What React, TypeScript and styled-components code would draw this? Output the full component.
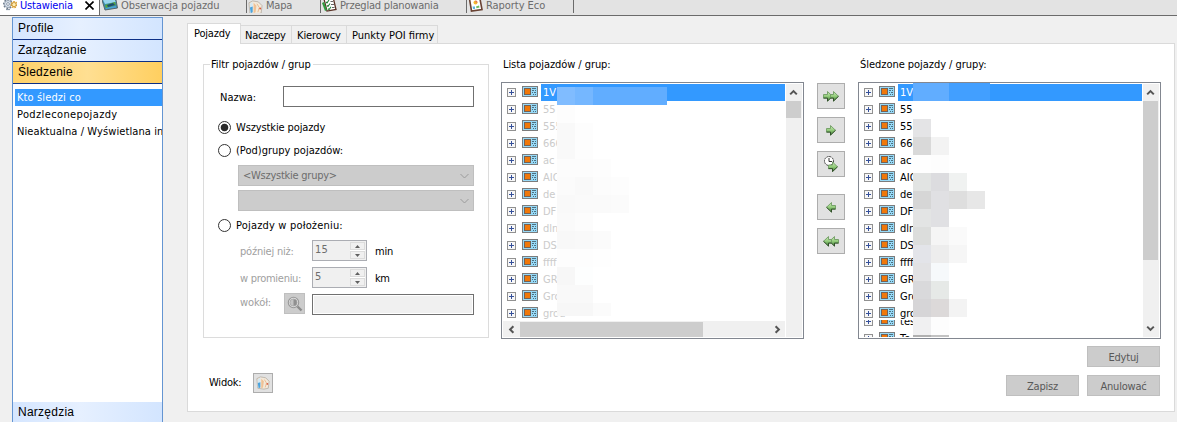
import React from 'react';
import styled, { createGlobalStyle, css } from 'styled-components';

const Global = createGlobalStyle`
  * { box-sizing: border-box; }
  body { margin: 0; background: #f0f0f0; overflow: hidden; }
`;

const App_ = styled.div`
  width: 1177px;
  height: 422px;
  overflow: hidden;
  display: flex;
  flex-direction: column;
  background: #f0f0f0;
  color: #000;
  font: 11px/17px 'DejaVu Sans Condensed', 'DejaVu Sans', sans-serif;
  font-stretch: condensed;
  white-space: pre;
  svg { display: block; flex: none; }
`;

const Text = styled.span<{ $ls?: number; $color?: string }>`
  letter-spacing: ${p => p.$ls ?? -0.2}px;
  color: ${p => p.$color ?? 'inherit'};
`;

/* Top document tabs */
const TopBar = styled.div`
  display: flex;
  flex: none;
  height: 16px;
  background: #e3e3e3;
  border-bottom: 1px solid #6b6b6b;
`;
const TopTab = styled.div<{ $w: number; $active?: boolean; $pad?: number }>`
  display: flex;
  align-items: flex-start;
  width: ${p => p.$w}px;
  height: ${p => (p.$active ? 15 : 13)}px;
  padding-left: ${p => p.$pad ?? 0}px;
  gap: 3px;
  overflow: hidden;
  border-right: 1px solid #6b6b6b;
  color: ${p => (p.$active ? '#0000f0' : '#6c6c6c')};
  background: ${p => (p.$active ? '#fff' : 'transparent')};
  ${Text} { line-height: 17px; margin-top: -3px; }
`;
const CloseX = styled.svg`margin: 1px 0 0 9px;`;

const Body = styled.div`
  display: flex;
  flex: 1;
  min-height: 0;
`;

/* Sidebar */
const Sidebar = styled.div`
  display: flex;
  flex-direction: column;
  flex: none;
  width: 151px;
  height: 407px;
  margin: 1px 0 0 12px;
  border: 1px solid #6495d2;
  border-bottom: 0;
  background: #fff;
  overflow: hidden;
`;
const Section = styled.div<{ $active?: boolean }>`
  flex: none;
  height: 22px;
  padding-left: 5px;
  border-bottom: 1px solid #0c2f86;
  font: 12px/21px 'Liberation Sans', sans-serif;
  letter-spacing: 0.25px;
  background: ${p =>
    p.$active
      ? 'linear-gradient(90deg, #ffd168, #ffdf92 50%, #ffcf60)'
      : 'linear-gradient(90deg, #d5e6ff, #e6f0ff 45%, #d3e5ff)'};
`;
const SideItems = styled.div`
  flex: 1;
  padding: 5px 0 0 2px;
`;
const SideItem = styled.div<{ $selected?: boolean }>`
  height: 17px;
  padding-left: 2px;
  overflow: hidden;
  ${p => p.$selected && css`background: #3399ff; color: #fff;`}
`;

/* Main area */
const Main = styled.div`
  display: flex;
  flex-direction: column;
  width: 988px;
  margin: 7px 0 0 24px;
`;
const Tabs = styled.div`
  display: flex;
  align-items: flex-end;
  height: 20px;
`;
const Tab = styled.div<{ $w: number; $active?: boolean; $pad?: number }>`
  width: ${p => p.$w}px;
  height: ${p => (p.$active ? 21 : 18)}px;
  margin-bottom: ${p => (p.$active ? -1 : 0)}px;
  padding-left: ${p => p.$pad ?? 5}px;
  line-height: 19px;
  border: 1px solid #dadada;
  border-left-width: ${p => (p.$active ? 1 : 0)}px;
  border-bottom: 0;
  position: relative;
  background: ${p => (p.$active ? '#fff' : '#f0f0f0')};
`;
const Panel = styled.div`
  display: flex;
  height: 369px;
  background: #fff;
  border: 1px solid #dadada;
`;
const FilterCol = styled.div`
  width: 286px;
  margin: 12px 0 0 15px;
`;
const FilterBox = styled.fieldset`
  height: 282px;
  margin: 0;
  padding: 13px 14px 0 14px;
  min-width: 0;
  border: 1px solid #dcdcdc;
  legend { padding: 0 2px 0 1px; margin-left: -8px; line-height: 18px; height: 17px; }
`;
const Row = styled.div<{ $h: number; $mt?: number; $indent?: number }>`
  display: flex;
  align-items: center;
  height: ${p => p.$h}px;
  margin-top: ${p => p.$mt ?? 0}px;
  padding-left: ${p => p.$indent ?? 0}px;
`;
const Label = styled.div<{ $w: number; $muted?: boolean; $pt?: number; $pb?: number }>`
  flex: none;
  width: ${p => p.$w}px;
  padding-top: ${p => p.$pt ?? 0}px;
  padding-bottom: ${p => p.$pb ?? 0}px;
  color: ${p => (p.$muted ? '#a0a0a0' : '#000')};
`;
const Input = styled.div<{ $w: number; $disabled?: boolean }>`
  width: ${p => p.$w}px;
  height: 21px;
  flex: none;
  border: 1px solid #707070;
  background: ${p => (p.$disabled ? '#f0f0f0' : '#fff')};
  ${p => p.$disabled && css`box-shadow: inset 0 0 0 1px #fff;`}
`;
const Radio = styled.div<{ $on?: boolean }>`
  width: 13px;
  height: 13px;
  flex: none;
  margin-right: 5px;
  border-radius: 50%;
  border: 1px solid #333;
  background: ${p => (p.$on ? 'radial-gradient(circle, #2b2b2b 3.4px, #fff 4.2px)' : '#fff')};
`;
const Select = styled.div`
  display: flex;
  align-items: center;
  justify-content: space-between;
  width: 236px;
  height: 21px;
  padding: 0 4px;
  border: 1px solid #bfbfbf;
  background: #ccc;
  color: #6d6d6d;
`;
const Spinner = styled.div`
  display: flex;
  justify-content: space-between;
  width: 55px;
  height: 21px;
  flex: none;
  margin-right: 8px;
  padding-left: 2px;
  border: 1px solid #abadb3;
  background: #f0f0f0;
  color: #6d6d6d;
`;
const SpinButtons = styled.div`
  display: flex;
  flex-direction: column;
  gap: 1px;
  width: 15px;
  margin: 1px 1px 1px 0;
  background: #fff;
`;
const SpinButton = styled.div`
  display: flex;
  align-items: center;
  justify-content: center;
  flex: 1;
  border: 1px solid #dcdcdc;
  background: #f0f0f0;
`;
const IconButton = styled.div<{ $w: number; $h: number; $dark?: boolean; $mt?: number }>`
  display: flex;
  align-items: center;
  justify-content: center;
  flex: none;
  width: ${p => p.$w}px;
  height: ${p => p.$h}px;
  margin-top: ${p => p.$mt ?? 0}px;
  border: 1px solid ${p => (p.$dark ? '#bfbfbf' : '#adadad')};
  background: ${p => (p.$dark ? '#ccc' : '#e1e1e1')};
`;

const ListCol = styled.div<{ $ml: number }>`
  width: 303px;
  flex: none;
  margin: 11px 0 0 ${p => p.$ml}px;
`;
const ListTitle = styled.div`
  height: 27px;
  padding-left: 2px;
  line-height: 20px;
`;
const ListBox = styled.div`
  position: relative;
  display: flex;
  height: 257px;
  padding: 1px;
  border: 1px solid #828790;
  overflow: hidden;
`;
const ListMain = styled.div`
  display: flex;
  flex-direction: column;
  flex: 1;
`;
const Rows = styled.div<{ $h: number; $muted?: boolean; $shift?: number }>`
  height: ${p => p.$h}px;
  flex: none;
  overflow: hidden;
  color: ${p => (p.$muted ? '#cbcbcb' : '#000')};
  & > :first-child { margin-top: -${p => p.$shift ?? 0}px; }
`;
const TreeRow = styled.div`
  display: flex;
  align-items: center;
  height: 17px;
  padding-left: 4px;
`;
const TreeIcon = styled.svg`margin: -2px 0 0 6px;`;
const TreeText = styled.div<{ $selected?: boolean }>`
  flex: 1;
  height: 17px;
  margin-left: 3px;
  padding-left: 2px;
  ${p => p.$selected && css`background: #3399ff; color: #fff;`}
`;
const VScroll = styled.div`
  display: flex;
  flex-direction: column;
  align-items: flex-start;
  width: 16px;
  margin-left: 1px;
  background: #f0f0f0;
`;
const Arrow = styled.div`
  display: flex;
  align-items: center;
  justify-content: center;
  flex: none;
  width: 15px;
  height: 17px;
`;
const VThumb = styled.div<{ $h: number }>`
  width: 15px;
  height: ${p => p.$h}px;
  margin-bottom: auto;
  background: #cdcdcd;
`;
const HScroll = styled.div`
  display: flex;
  align-items: center;
  height: 16px;
  padding-left: 1px;
  background: #f0f0f0;
`;
const HThumb = styled.div`
  width: 183px;
  height: 15px;
  margin: 0 auto 0 1px;
  background: #cdcdcd;
`;
/* Pixelated cover drawn over the row names */
const Mask = styled.div<{ $x: number; $y: number }>`
  position: absolute;
  left: ${p => p.$x}px;
  top: ${p => p.$y}px;
`;
const MaskRow = styled.div<{ $h?: number; $gap?: boolean }>`
  display: flex;
  width: 108px;
  height: ${p => p.$h ?? 18}px;
  background: ${p => (p.$gap ? 'transparent' : '#fff')};
`;
const MaskCell = styled.div<{ $c: string; $w?: number }>`
  flex: none;
  width: ${p => p.$w ?? 18}px;
  background: ${p => p.$c};
`;

const MoveCol = styled.div`
  width: 28px;
  flex: none;
  margin: 39px 0 0 13px;
`;
const Footer = styled.div`
  display: flex;
  flex-direction: column;
  align-items: flex-end;
  gap: 8px;
  margin: 7px 1px 0 0;
`;
const ButtonRow = styled.div`
  display: flex;
  gap: 8px;
`;
const Button = styled.div`
  width: 73px;
  height: 21px;
  text-align: center;
  line-height: 21px;
  border: 1px solid #bfbfbf;
  background: #ccc;
  color: #585858;
`;

const Gears = () => (
  <svg width="16" height="12" viewBox="0 0 16 12">
    <circle cx="7" cy="4" r="4.2" fill="none" stroke="#6f7c8c" strokeWidth="1.6" strokeDasharray="1.8 1.3" />
    <circle cx="7" cy="4" r="3.5" fill="#dfe7f1" stroke="#8290a2" strokeWidth=".8" />
    <circle cx="7" cy="4" r="1.4" fill="#fff" stroke="#66758a" strokeWidth=".7" />
    <circle cx="13" cy="4.6" r="2.9" fill="none" stroke="#d9a02c" strokeWidth="1.4" strokeDasharray="1.6 .9" />
    <circle cx="13" cy="4.6" r="2.1" fill="#ffeeb4" stroke="#c98c22" strokeWidth=".8" />
    <path d="M5 9.6h4" stroke="#8290a2" />
  </svg>
);
const Screen = () => (
  <svg width="16" height="12" viewBox="0 0 16 12">
    <path d="M0 0L14 0 15.5 8 3 10z" fill="#3b8fb0" stroke="#56646c" />
    <path d="M1 0h12l.6 2L3 4z" fill="#9ad5ee" />
    <path d="M3 5l10-3 .8 3L4 8z" fill="#57a53a" />
    <path d="M5 5l6-2 2 2-7 2z" fill="#1d4c74" />
    <path d="M3.6 8l10-2 .6 1.4L4 9z" fill="#4ba6d8" />
  </svg>
);
const MapIcon = ({ size = 15 }: { size?: number }) => (
  <svg width={size} height={size} viewBox="0 0 16 16">
    <path d="M1 3l4-2 6 1 4 4-1 8-5 1-7-1z" fill="#f3e9da" stroke="#b0a79c" strokeWidth=".8" />
    <path d="M2 4l3-2v6l-2 6-1-1z" fill="#d4e8f3" />
    <path d="M2 8l3-1v6l-2 1z" fill="#4ba3dd" />
    <path d="M6 3l3 3-1 7-2 1z" fill="#efc194" />
    <path d="M9.5 4l2.5 4-1.5 5" fill="none" stroke="#e8b78b" strokeWidth="1" />
    <circle cx="13" cy="9" r="1" fill="#dd5a3c" />
  </svg>
);
const Checklist = () => (
  <svg width="16" height="12" viewBox="0 0 16 12">
    <path d="M3 -1h9.5l2.5 10.5-9 1.6z" fill="#fff" stroke="#5a3226" strokeWidth="1.3" />
    <path d="M1 3l3 8 2-1L3 2z" fill="#2f9a3e" />
    <path d="M5 2l1 1 2-3M6 5.5l1 1 2-3M7 8.7l1 1 2-3" fill="none" stroke="#238238" strokeWidth="1.1" />
    <path d="M9.5 1.5h2.5M10 4.5h3M11 7.5h2.5" stroke="#666" />
  </svg>
);
const Report = () => (
  <svg width="16" height="12" viewBox="0 0 16 12">
    <path d="M2.5 -1L13 -1 15 9.5 4.5 11z" fill="#fff" stroke="#6a4334" strokeWidth="1.6" />
    <circle cx="8.5" cy="2.5" r="2" fill="#f5bb2f" />
    <path d="M8.5 2.5V.5a2 2 0 012 2z" fill="#e36a5e" />
    <path d="M5.5 6.5h2.5v2.5h-2z" fill="#5cb3df" />
    <path d="M9 6.5l3-1 .5 2-3 .7z" fill="#6cbd62" />
  </svg>
);
const Plus = () => (
  <svg width="9" height="9" viewBox="0 0 9 9" shapeRendering="crispEdges">
    <rect x=".5" y=".5" width="8" height="8" fill="#f7f7f7" stroke="#919191" />
    <path d="M2 4.5h5M4.5 2v5" stroke="#35509a" />
  </svg>
);
const Card = () => (
  <TreeIcon width="16" height="11" viewBox="0 0 16 11" shapeRendering="crispEdges">
    <rect x=".5" y=".5" width="15" height="10" fill="#97daf8" stroke="#7c7c7c" />
    <rect x="2.5" y="2.5" width="6" height="6" fill="#f0780a" stroke="#746256" />
    <path d="M10 2.5h4M10 4.5h2M13 4.5h1M10 6.5h1M12 6.5h2M11 8.5h1M13 8.5h1" stroke="#4d7080" />
  </TreeIcon>
);
const rotations = { up: 0, right: 90, down: 180, left: 270 };
const Chevron = ({ dir }: { dir: keyof typeof rotations }) => (
  <svg width="9" height="9" viewBox="0 0 9 9">
    <path transform={`rotate(${rotations[dir]} 4.5 4.5)`} d="M1.2 6.4L4.5 3.1 7.8 6.4" fill="none" stroke="#555" strokeWidth="2" />
  </svg>
);
const SelectArrow = () => (
  <svg width="9" height="6" viewBox="0 0 9 6"><path d="M.5 1l4 4 4-4" fill="none" stroke="#9b9b9b" /></svg>
);
const Triangle = ({ down }: { down?: boolean }) => (
  <svg width="5" height="3" viewBox="0 0 5 3"><path d={down ? 'M0 0h5L2.5 3z' : 'M0 3h5L2.5 0z'} fill="#606060" /></svg>
);
const Defs = () => (
  <defs>
    <linearGradient id="leaf" x1="0" y1="0" x2="0" y2="1">
      <stop offset="0" stopColor="#cdeab8" /><stop offset=".5" stopColor="#93cc7b" /><stop offset="1" stopColor="#3a7a30" />
    </linearGradient>
  </defs>
);
const arrowPath = 'M.5 3.5h4v-3l5 4.8-5 4.8v-3h-4z';
const MoveIcon = ({ count = 1, left, clock }: { count?: number; left?: boolean; clock?: boolean }) => (
  <svg width={clock ? 14 : count === 2 ? 16 : 10} height={clock ? 16 : 11} viewBox={clock ? '0 0 14 16' : `0 0 ${count === 2 ? 16 : 10} 11`}>
    <Defs />
    {clock && <><circle cx="5" cy="5" r="4.5" fill="#fff" stroke="#444" strokeDasharray="2 .6" /><path d="M5 2v3.5h3" fill="none" stroke="#333" /></>}
    <g transform={clock ? 'translate(4 5.5)' : left ? `translate(${count === 2 ? 16 : 10} 0) scale(-1 1)` : undefined} fill="url(#leaf)" stroke="#6f9c63" strokeWidth=".9">
      <path d={arrowPath} />
      <path d="M9.5 5.3l-5 4.8v-3h-4" fill="none" stroke="#2b4725" />
      {count === 2 && <g transform="translate(6 0)"><path d="M1.5 3.5h3v-3l5 4.8-5 4.8v-3h-3z" /><path d="M9.5 5.3l-5 4.8v-3h-3" fill="none" stroke="#2b4725" /></g>}
    </g>
  </svg>
);
const Magnifier = () => (
  <svg width="16" height="16" viewBox="0 0 16 16">
    <circle cx="6.5" cy="6.5" r="5.2" fill="#e3e3e3" stroke="#999" strokeWidth="1.1" />
    <circle cx="6.5" cy="6.5" r="3.6" fill="#c4c4c4" stroke="#a0a0a0" strokeWidth=".7" />
    <path d="M6.5 3.2a3.3 3.3 0 010 6.6z" fill="#909090" />
    <path d="M10.5 10.5l4 4" stroke="#8b8b8b" strokeWidth="2.4" />
  </svg>
);

const names = ['1V', '55', '555', '666', 'ac', 'AIO', 'de', 'DF', 'dln', 'DS', 'ffff', 'GR', 'Gro', 'grou'];

const Tree = ({ items, selected }: { items: string[]; selected?: boolean }) => (
  <>
    {items.map((n, i) => (
      <TreeRow key={n}>
        <Plus />
        <Card />
        <TreeText $selected={selected && i === 0}><Text $ls={0}>{n}</Text></TreeText>
      </TreeRow>
    ))}
  </>
);

const leftMask = [
  ['#fdfdfd'], ['#f9f9f9', '#fdfdfd'], ['#f9f9f9', '#fdfdfd'], ['#fcfcfc', '#fcfcfc', '#fdfdfd'],
  ['#fbfbfb', '#f9f9f9', '#fcfcfc', '#fdfdfd'], ['#f9f9f9', '#fafafa', '#fafafa', '#fbfbfb'],
  ['#fafafa', '#fcfcfc'], ['#f8f8f8', '#f9f9f9', '#fbfbfb'], ['#fdfdfd', '#fdfdfd', '#fefefe'],
  ['#f7f7f7', '#fdfefe'], ['#f9f9f9', '#f9f9f9'], ['#f7f7f7', '#f7f7f7', '#fbfbfb'],
];
const rightMask = [
  [], ['#e4e4e6'], ['#d9d9d9', '#f3f3f3'], ['#fefefe', '#fdfdfd'], ['#e2e4e3', '#dcdcdf', '#f0f2f1'],
  ['#d6d6d6', '#e0e0e3', '#dedede', '#e7e7e7'], ['#e3e4e4', '#e0e0e3'], ['#dcdddc', '#f5f5f5', '#fafafa'],
  ['#e3e4e9', '#ededed', '#f6f6f6'], ['#e2e2e4', '#f6f9fb'], ['#d9d9db', '#e6e9e7'],
  ['#d6d5d7', '#dcd9d9', '#f3f3f3'], ['#f0f0f1', '#fdfdfd'],
];
const Cells = ({ colors }: { colors: string[] }) => <>{colors.map((c, i) => <MaskCell key={i} $c={c} />)}</>;

const Spin = ({ value }: { value: string }) => (
  <Spinner>
    <Text $ls={0.1}>{value}</Text>
    <SpinButtons>
      <SpinButton><Triangle /></SpinButton>
      <SpinButton><Triangle down /></SpinButton>
    </SpinButtons>
  </Spinner>
);

export default function App() {
  return (
    <App_>
      <Global />
      <TopBar>
        <TopTab $w={100} $active $pad={1}>
          <Gears /><Text $ls={-0.15}>Ustawienia</Text>
          <CloseX width="9" height="9" viewBox="0 0 9 9"><path d="M.5.5l8 8M8.5.5l-8 8" stroke="#000" strokeWidth="1.6" /></CloseX>
        </TopTab>
        <TopTab $w={147} $pad={2}><Screen /><Text $ls={-0.08}>Obserwacja pojazdu</Text></TopTab>
        <TopTab $w={74} $pad={1}><MapIcon /><Text>Mapa</Text></TopTab>
        <TopTab $w={146}><Checklist /><Text>Przeglad planowania</Text></TopTab>
        <TopTab $w={107}><Report /><Text $ls={-0.05}>Raporty Eco</Text></TopTab>
      </TopBar>
      <Body>
        <Sidebar>
          <Section>Profile</Section>
          <Section>Zarządzanie</Section>
          <Section $active>Śledzenie</Section>
          <SideItems>
            <SideItem $selected><Text $ls={0.12}>Kto śledzi co</Text></SideItem>
            <SideItem><Text $ls={0.37}>Podzleconepojazdy</Text></SideItem>
            <SideItem><Text $ls={0.1}>Nieaktualna / Wyświetlana in</Text></SideItem>
          </SideItems>
          <Section>Narzędzia</Section>
        </Sidebar>
        <Main>
          <Tabs>
            <Tab $w={54} $active $pad={6}><Text>Pojazdy</Text></Tab>
            <Tab $w={51} $pad={4}><Text $ls={-0.25}>Naczepy</Text></Tab>
            <Tab $w={55}><Text $ls={-0.1}>Kierowcy</Text></Tab>
            <Tab $w={91}><Text $ls={0}>Punkty POI firmy</Text></Tab>
          </Tabs>
          <Panel>
            <FilterCol>
              <FilterBox>
                <legend><Text $ls={-0.05}>Filtr pojazdów / grup</Text></legend>
                <Row $h={21} $indent={2}>
                  <Label $w={63} $pt={2}><Text $ls={0}>Nazwa:</Text></Label>
                  <Input $w={191} />
                </Row>
                <Row $h={17} $mt={12}><Radio $on /><Text $ls={-0.12}>Wszystkie pojazdy</Text></Row>
                <Row $h={17} $mt={6}><Radio /><Text $ls={0}>(Pod)grupy pojazdów:</Text></Row>
                <Row $h={21} $mt={6} $indent={20}><Select><Text $ls={-0.25}>{'<Wszystkie grupy>'}</Text><SelectArrow /></Select></Row>
                <Row $h={21} $mt={4} $indent={20}><Select><span /><SelectArrow /></Select></Row>
                <Row $h={17} $mt={6}><Radio /><Text $ls={0.18}>Pojazdy w położeniu:</Text></Row>
                <Row $h={21} $mt={6} $indent={22}>
                  <Label $w={72} $muted $pt={2}><Text>później niż:</Text></Label><Spin value="15" />
                  <Label $w={30} $pt={2}><Text>min</Text></Label>
                </Row>
                <Row $h={21} $mt={6} $indent={22}>
                  <Label $w={72} $muted $pt={2}><Text $ls={-0.28}>w promieniu:</Text></Label><Spin value="5" />
                  <Label $w={30} $pt={2}><Text $ls={-0.4}>km</Text></Label>
                </Row>
                <Row $h={23} $mt={4} $indent={22}>
                  <Label $w={44} $muted $pb={3}><Text $ls={-0.1}>wokół:</Text></Label>
                  <IconButton $w={21} $h={21} $dark><Magnifier /></IconButton>
                  <Row $h={21} $mt={2} $indent={7}><Input $w={162} $disabled /></Row>
                </Row>
              </FilterBox>
              <Row $h={21} $mt={34} $indent={6}>
                <Label $w={44}><Text>Widok:</Text></Label>
                <IconButton $w={20} $h={20}><MapIcon size={14} /></IconButton>
              </Row>
            </FilterCol>

            <ListCol $ml={12}>
              <ListTitle><Text $ls={-0.07}>Lista pojazdów / grup:</Text></ListTitle>
              <ListBox>
                <ListMain>
                  <Rows $h={237} $muted><Tree items={names} selected /></Rows>
                  <HScroll>
                    <Arrow><Chevron dir="left" /></Arrow>
                    <HThumb />
                    <Arrow><Chevron dir="right" /></Arrow>
                  </HScroll>
                </ListMain>
                <VScroll>
                  <Arrow><Chevron dir="up" /></Arrow>
                  <VThumb $h={17} />
                </VScroll>
                <Mask $x={55} $y={4}>
                  <MaskRow $gap><MaskCell $c="#80bcff" /><MaskCell $c="#75b7ff" /><MaskCell $c="#61adff" $w={74} /></MaskRow>
                  {leftMask.map((c, i) => <MaskRow key={i} $h={i === 11 ? 13 : 18}><Cells colors={c} /></MaskRow>)}
                </Mask>
              </ListBox>
            </ListCol>

            <MoveCol>
              <IconButton $w={28} $h={26}><MoveIcon count={2} /></IconButton>
              <IconButton $w={28} $h={26} $mt={8}><MoveIcon /></IconButton>
              <IconButton $w={28} $h={26} $mt={8}><MoveIcon clock /></IconButton>
              <IconButton $w={28} $h={26} $mt={17}><MoveIcon left /></IconButton>
              <IconButton $w={28} $h={26} $mt={8}><MoveIcon count={2} left /></IconButton>
            </MoveCol>

            <ListCol $ml={13}>
              <ListTitle><Text $ls={-0.04}>Śledzone pojazdy / grupy:</Text></ListTitle>
              <ListBox>
                <ListMain>
                  <Rows $h={236}><Tree items={names} selected /></Rows>
                  <Rows $h={17} $shift={7}><Tree items={['tes', 'Te']} /></Rows>
                </ListMain>
                <VScroll>
                  <Arrow><Chevron dir="up" /></Arrow>
                  <VThumb $h={159} />
                  <Arrow><Chevron dir="down" /></Arrow>
                </VScroll>
                <Mask $x={54} $y={0}>
                  <MaskRow $gap><MaskCell $c="#61adff" $w={36} /><MaskCell $c="#429fff" $w={41} /></MaskRow>
                  {rightMask.map((c, i) => <MaskRow key={i}><Cells colors={c} /></MaskRow>)}
                  <MaskRow $h={2}><Cells colors={['#b0b0b0', '#c2c2c2']} /></MaskRow>
                </Mask>
              </ListBox>
              <Footer>
                <Button><Text>Edytuj</Text></Button>
                <ButtonRow>
                  <Button><Text>Zapisz</Text></Button>
                  <Button><Text>Anulować</Text></Button>
                </ButtonRow>
              </Footer>
            </ListCol>
          </Panel>
        </Main>
      </Body>
    </App_>
  );
}
